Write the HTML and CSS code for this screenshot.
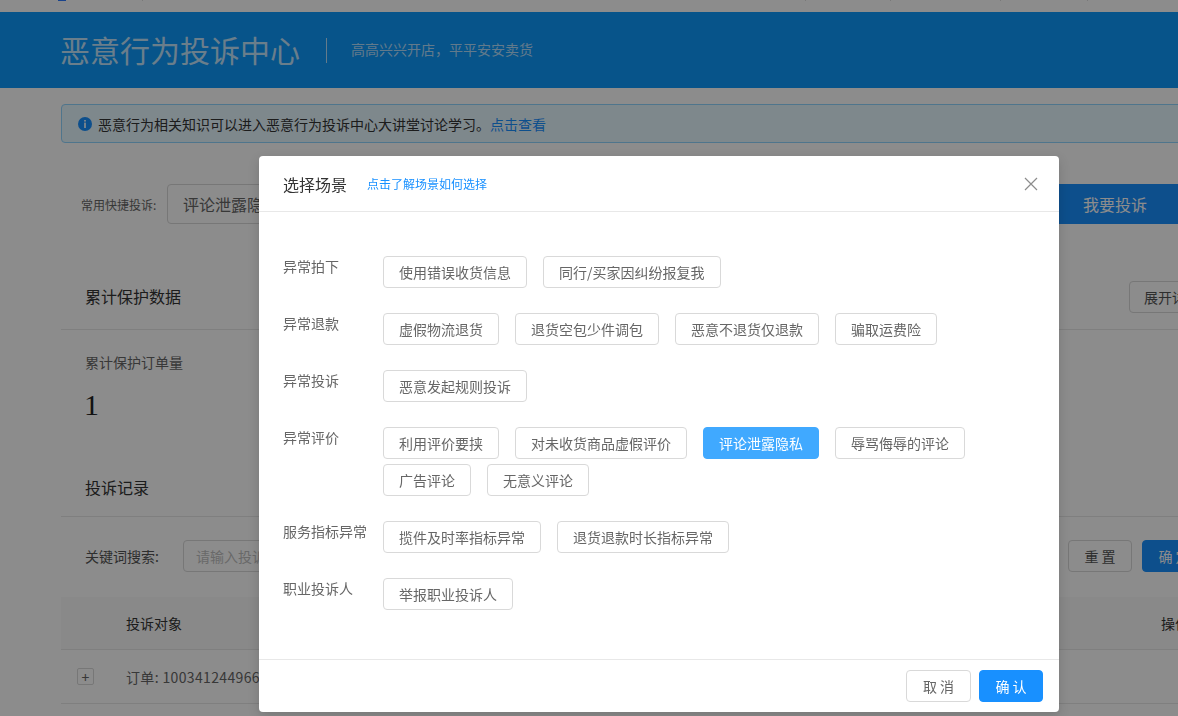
FILE: index.html
```html
<!DOCTYPE html>
<html lang="zh-CN">
<head>
<meta charset="utf-8">
<title>恶意行为投诉中心</title>
<link rel="stylesheet" href="styles.css">
</head>
<body>
<div class="page">
  <div class="topbar">
    <span class="mark mark-blue"></span>
    <span class="mark mark-a"></span>
    <span class="mark mark-b"></span>
    <span class="mark mark-c"></span>
    <span class="mark mark-d"></span>
    <span class="mark mark-e"></span>
  </div>
  <header class="hero">
    <h1 class="hero-title">恶意行为投诉中心</h1>
    <span class="hero-sep"></span>
    <p class="hero-sub">高高兴兴开店，平平安安卖货</p>
  </header>
  <main class="main">
    <div class="alert">
      <svg class="alert-icon" viewBox="0 0 14 14" aria-hidden="true">
        <circle cx="7" cy="7" r="7" fill="#1890ff"/>
        <rect x="6.2" y="3" width="1.6" height="1.6" fill="#fff"/>
        <rect x="6.2" y="5.6" width="1.6" height="5.4" fill="#fff"/>
      </svg>
      <span>恶意行为相关知识可以进入恶意行为投诉中心大讲堂讨论学习。<a class="link">点击查看</a></span>
    </div>
    <div class="quick">
      <span class="quick-label">常用快捷投诉:</span>
      <div class="quick-input">评论泄露隐私</div>
      <button class="quick-btn">我要投诉</button>
    </div>
    <section class="head head-stats">
      <h2 class="head-title">累计保护数据</h2>
      <button class="btn btn-detail">展开详情</button>
    </section>
    <div class="stat-label">累计保护订单量</div>
    <div class="stat-value">1</div>
    <section class="head head-records">
      <h2 class="head-title">投诉记录</h2>
    </section>
    <div class="filter">
      <span class="filter-label">关键词搜索:</span>
      <div class="filter-input">请输入投诉对象</div>
      <button class="btn btn-reset">重 置</button>
      <button class="btn btn-ok">确 定</button>
    </div>
    <div class="table-head">
      <span class="col-main">投诉对象</span>
      <span class="col-op">操作</span>
    </div>
    <div class="table-row">
      <span class="expander">+</span>
      <span class="row-text">订单: 1003412449660</span>
    </div>
  </main>
</div>

<div class="mask"></div>

<div class="modal">
  <div class="modal-head">
    <span class="modal-title">选择场景</span>
    <a class="modal-link">点击了解场景如何选择</a>
    <svg class="modal-close" viewBox="0 0 14 14" aria-hidden="true">
      <path d="M1 1 13 13M13 1 1 13" stroke="#8c8c8c" stroke-width="1.2" fill="none"/>
    </svg>
  </div>
  <div class="modal-body">
    <div class="scene">
      <div class="scene-label">异常拍下</div>
      <div class="scene-opts">
        <button class="opt">使用错误收货信息</button>
        <button class="opt">同行/买家因纠纷报复我</button>
      </div>
    </div>
    <div class="scene">
      <div class="scene-label">异常退款</div>
      <div class="scene-opts">
        <button class="opt">虚假物流退货</button>
        <button class="opt">退货空包少件调包</button>
        <button class="opt">恶意不退货仅退款</button>
        <button class="opt">骗取运费险</button>
      </div>
    </div>
    <div class="scene">
      <div class="scene-label">异常投诉</div>
      <div class="scene-opts">
        <button class="opt">恶意发起规则投诉</button>
      </div>
    </div>
    <div class="scene">
      <div class="scene-label">异常评价</div>
      <div class="scene-opts">
        <button class="opt">利用评价要挟</button>
        <button class="opt">对未收货商品虚假评价</button>
        <button class="opt opt-active">评论泄露隐私</button>
        <button class="opt">辱骂侮辱的评论</button>
        <button class="opt">广告评论</button>
        <button class="opt">无意义评论</button>
      </div>
    </div>
    <div class="scene">
      <div class="scene-label">服务指标异常</div>
      <div class="scene-opts">
        <button class="opt">揽件及时率指标异常</button>
        <button class="opt">退货退款时长指标异常</button>
      </div>
    </div>
    <div class="scene">
      <div class="scene-label">职业投诉人</div>
      <div class="scene-opts">
        <button class="opt">举报职业投诉人</button>
      </div>
    </div>
  </div>
  <div class="modal-foot">
    <button class="btn btn-cancel">取 消</button>
    <button class="btn btn-confirm">确 认</button>
  </div>
</div>
</body>
</html>
```
FILE: styles.css
```css
* { box-sizing: border-box; }
html, body {
  margin: 0;
  width: 1178px;
  height: 716px;
  overflow: hidden;
  background: #fff;
  font-family: "Noto Sans CJK SC", "Liberation Sans", sans-serif;
  font-size: 14px;
  color: #666;
}
h1, h2, p { margin: 0; font-weight: 400; }
button { font-family: inherit; cursor: pointer; }

.page { width: 1178px; height: 716px; overflow: hidden; }

.topbar { height: 12px; display: flex; align-items: flex-start; }
.mark { display: block; width: 1px; height: 1px; background: #ddd; }
.mark-blue { width: 8px; margin-left: 58px; background: #2f7bff; }
.mark-a { margin-left: 76px; }
.mark-b { margin-left: 662px; }
.mark-c { margin-left: 84px; }
.mark-d { margin-left: 109px; }
.mark-e { margin-left: 86px; }

.hero {
  height: 76px;
  background: #0d99fb;
  padding-left: 60px;
  display: flex;
  align-items: center;
  color: #fff;
}
.hero-title { font-size: 30px; line-height: 40px; width: 241px; margin-bottom: 2px; color: rgba(255,255,255,.75); }
.hero-sep { width: 1px; height: 25px; margin-left: 25px; background: rgba(255,255,255,.7); }
.hero-sub { margin-left: 24px; margin-bottom: 2px; font-size: 14px; color: rgba(255,255,255,.7); }

.main { width: 1145px; margin-left: 61px; }

.alert {
  margin-top: 16px;
  height: 39px;
  display: flex;
  align-items: center;
  gap: 6px;
  padding-left: 16px;
  border: 1px solid #91d5ff;
  border-radius: 4px;
  background: #e6f7ff;
  color: #333;
  line-height: 22px;
}
.alert-icon { width: 14px; height: 14px; flex: none; }
.link { color: #1890ff; }

.quick { margin-top: 41px; height: 40px; display: flex; align-items: center; padding-left: 20px; }
.quick-label { font-size: 12px; width: 86px; flex: none; color: #666; }
.quick-input {
  flex: 1;
  height: 40px;
  padding-left: 15px;
  border: 1px solid #d9d9d9;
  border-radius: 4px;
  font-size: 16px;
  line-height: 38px;
  color: #666;
}
.quick-btn {
  width: 182px;
  height: 40px;
  flex: none;
  border: 0;
  background: #1890ff;
  color: #fff;
  font-size: 16px;
  padding: 0;
}

.head {
  display: flex;
  align-items: flex-start;
  justify-content: space-between;
  border-bottom: 1px solid #e8e8e8;
  padding-left: 24px;
}
.head-stats { margin-top: 57px; height: 49px; }
.head-records { margin-top: 47px; height: 45px; }
.head-title { font-size: 16px; line-height: 30px; color: #333; }

.btn {
  height: 32px;
  border: 1px solid #d9d9d9;
  border-radius: 4px;
  background: #fff;
  color: #666;
  font-size: 14px;
  padding: 0;
}
.btn-detail { width: 86px; margin-right: -9px; color: #555; }

.stat-label { margin-top: 21px; padding-left: 24px; line-height: 22px; color: #666; }
.stat-value {
  margin-top: 12px;
  padding-left: 23px;
  height: 40px;
  font-family: "Liberation Serif", serif;
  font-size: 30px;
  line-height: 40px;
  color: #222;
}

.filter { margin-top: 23px; height: 32px; display: flex; align-items: center; padding-left: 24px; }
.filter-label { width: 98px; flex: none; color: #555; }
.filter-input {
  flex: 1;
  height: 32px;
  padding-left: 12px;
  border: 1px solid #d9d9d9;
  border-radius: 4px;
  line-height: 30px;
  color: #bfbfbf;
}
.btn-reset { width: 64px; margin-left: 16px; color: #555; }
.btn-ok { width: 64px; margin-left: 10px; background: #1890ff; border-color: #1890ff; color: #fff; }

.table-head {
  margin-top: 25px;
  height: 53px;
  display: flex;
  align-items: center;
  justify-content: space-between;
  padding-left: 65px;
  background: #fafafa;
  border-bottom: 1px solid #e8e8e8;
  color: #333;
}
.col-op { width: 45px; }
.table-row {
  height: 54px;
  display: flex;
  align-items: center;
  padding-left: 16px;
  border-bottom: 1px solid #e8e8e8;
}
.expander {
  width: 17px;
  height: 17px;
  display: flex;
  align-items: center;
  justify-content: center;
  border: 1px solid #d9d9d9;
  border-radius: 2px;
  color: #666;
  font-size: 14px;
  line-height: 1;
}
.row-text { margin-left: 32px; font-family: "Noto Sans CJK SC", sans-serif; letter-spacing: .35px; }

.mask { position: fixed; inset: 0; background: rgba(0,0,0,.45); }

.modal {
  position: absolute;
  left: 259px;
  top: 156px;
  width: 800px;
  display: flex;
  flex-direction: column;
  background: #fff;
  border-radius: 4px;
  box-shadow: 0 4px 12px rgba(0,0,0,.15);
}
.modal-head {
  height: 56px;
  display: flex;
  align-items: center;
  padding: 0 21px 0 24px;
  border-bottom: 1px solid #e8e8e8;
}
.modal-title { font-size: 16px; line-height: 24px; color: #333; width: 84px; }
.modal-link { font-size: 12px; color: #1890ff; }
.modal-close { width: 14px; height: 14px; margin-left: auto; }

.modal-body { padding: 44px 24px 44px; }
.scene { display: flex; margin-bottom: 20px; }
.scene:last-child { margin-bottom: 0; }
.scene-label { width: 100px; flex: none; line-height: 20px; color: #666; }
.scene-opts { display: flex; flex-wrap: wrap; flex: 1; }
.opt {
  height: 32px;
  margin: 0 16px 5px 0;
  padding: 0 15px;
  border: 1px solid #d9d9d9;
  border-radius: 4px;
  background: #fff;
  color: #666;
  font-size: 14px;
}
.opt-active { background: #40a9ff; border-color: #40a9ff; color: #fff; }

.modal-foot {
  height: 53px;
  display: flex;
  justify-content: flex-end;
  gap: 8px;
  padding: 10px 16px 0 0;
  border-top: 1px solid #e8e8e8;
}
.btn-cancel { width: 65px; }
.btn-confirm { width: 64px; background: #1890ff; border-color: #1890ff; color: #fff; }
```
